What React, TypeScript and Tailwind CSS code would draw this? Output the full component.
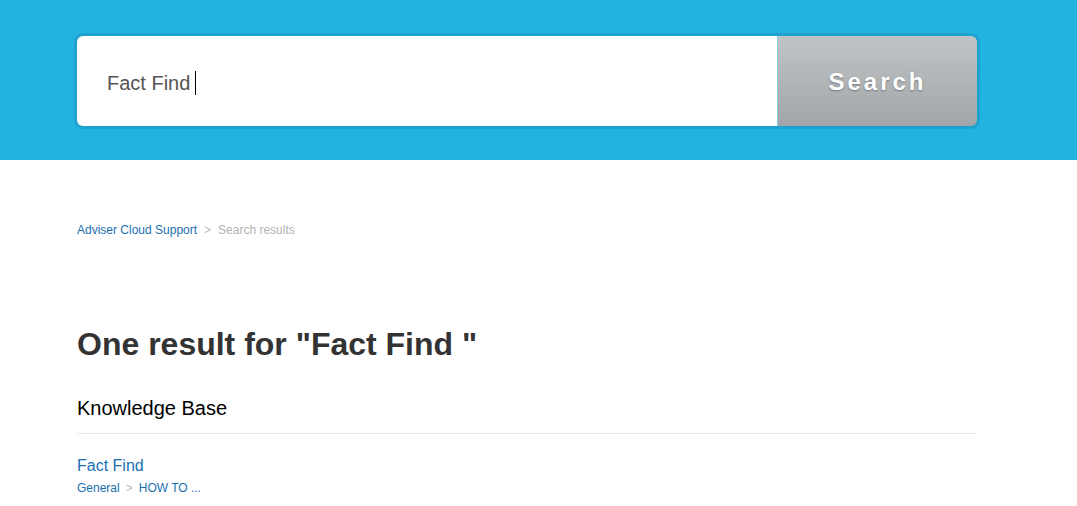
export default function App() {
  return (
    <div className="min-h-screen bg-white font-['Liberation_Sans',Arial,sans-serif]">
      <header className="h-[160px] bg-[#22b3e0] pt-[33px]">
        <div className="ml-[74px] flex h-[96px] w-[906px] rounded-[9px] bg-[#1ea3cf] p-[3px]">
          <div className="flex flex-1 items-center rounded-l-[6px] bg-white pl-[30px] pt-[4px]">
            <span className="text-[20px] text-[#555]">Fact Find</span>
            <span className="ml-[5px] h-[24px] w-px bg-black" />
          </div>
          <button className="flex w-[200px] items-center justify-center rounded-r-[6px] border-l border-[#7fd3ee] bg-gradient-to-b from-[#c1c4c6] to-[#a3a6a9] pt-[2px] text-[24px] font-bold tracking-[3px] text-white [text-shadow:0_1px_2px_rgba(0,0,0,0.35)]">
            Search
          </button>
        </div>
      </header>

      <main className="ml-[77px] w-[899px]">
        <nav className="mt-[61px] flex items-center text-[12px]">
          <a className="text-[#1a6fb0]">Adviser Cloud Support</a>
          <span className="mx-[7px] text-[#bbb]">&gt;</span>
          <span className="text-[#b3b3b3]">Search results</span>
        </nav>

        <h1 className="mt-[87px] text-[32px] font-bold leading-[36px] text-[#333]">
          One result for "Fact Find "
        </h1>

        <h2 className="mt-[34px] border-b border-[#e8e8e8] pb-[13px] text-[20px] leading-[24px] text-black">
          Knowledge Base
        </h2>

        <div className="mt-[22px]">
          <a className="block text-[16px] leading-[19px] text-[#1a6fb0]">Fact Find</a>
          <div className="mt-[4px] flex items-center text-[12px] text-[#1a6fb0]">
            <span>General</span>
            <span className="mx-[6px] text-[#bbb]">&gt;</span>
            <span>HOW TO ...</span>
          </div>
        </div>
      </main>
    </div>
  );
}
